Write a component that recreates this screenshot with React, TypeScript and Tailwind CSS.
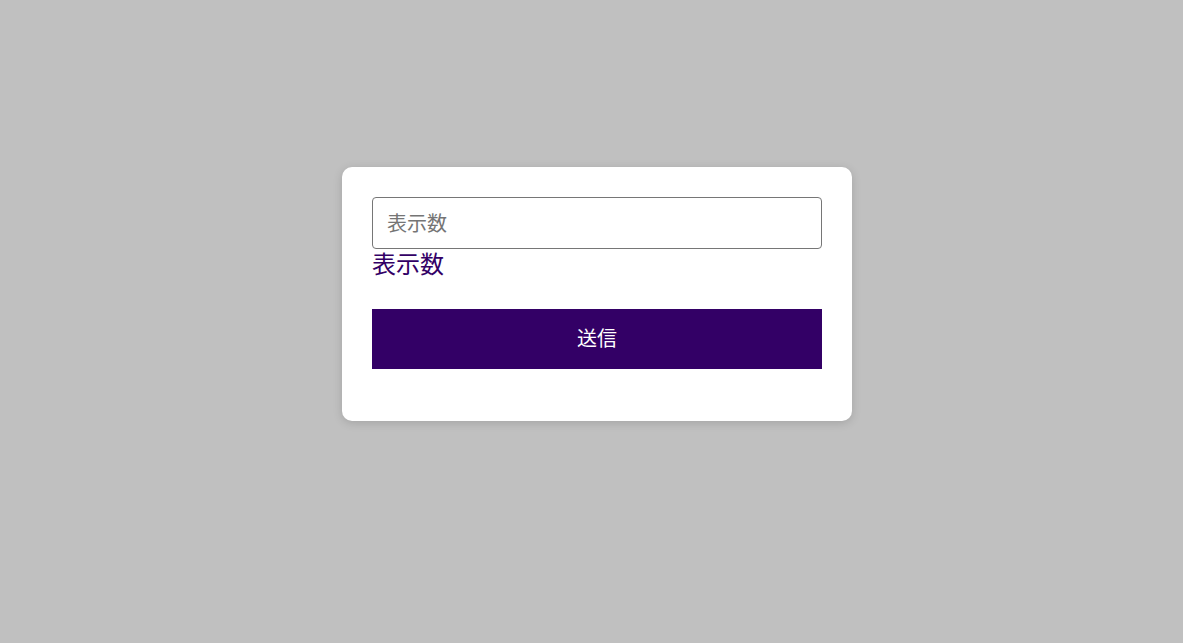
export default function App() {
  return (
    <div
      className="min-h-[643px] w-full bg-[#c0c0c0] pt-[167px] pl-[342px]"
      style={{ fontFamily: '"Noto Sans CJK JP", "Noto Sans", sans-serif' }}
    >
      <form
        className="flex w-[510px] flex-col rounded-[10px] bg-white px-[30px] pt-[30px] pb-[52px] shadow-[0_2px_10px_rgba(0,0,0,0.15)]"
        onSubmit={(e) => e.preventDefault()}
      >
        <input
          type="text"
          placeholder="表示数"
          className="h-[52px] w-full rounded-[4px] border border-[#767676] px-[14px] pb-[2px] text-[20px] text-[#333] outline-none placeholder:text-[#757575]"
        />
        <label className="mt-[-1px] mb-[2px] text-[24px] leading-[30px] text-[#330066]">表示数</label>
        <button
          type="submit"
          className="mt-[29px] h-[60px] w-full bg-[#330066] pb-[2px] text-[20px] text-white"
        >
          送信
        </button>
      </form>
    </div>
  );
}
